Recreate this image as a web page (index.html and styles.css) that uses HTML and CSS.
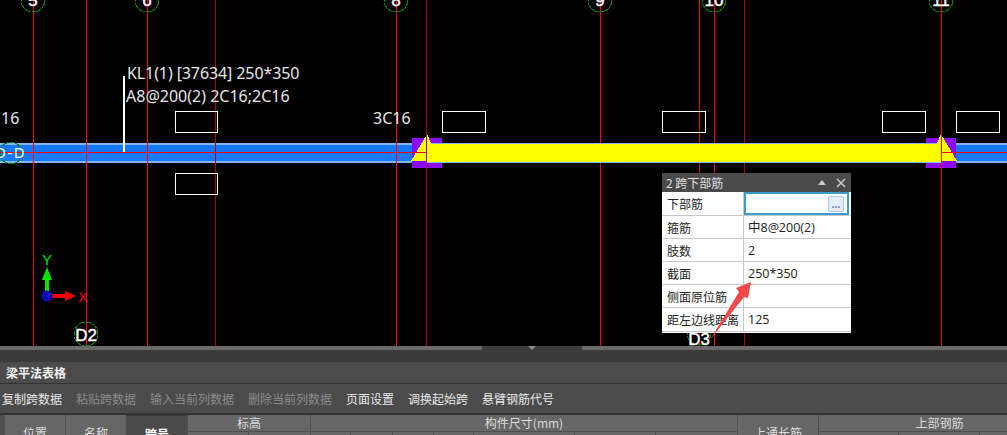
FILE: index.html
```html
<!DOCTYPE html>
<html lang="zh-CN">
<head>
  <meta charset="UTF-8" />
  <title>梁平法表格</title>
  <link rel="stylesheet" href="styles.css">
</head>
<body>

  <!-- CAD canvas -->
  <div class="canvas">
    <svg class="drawing" width="1007" height="346" viewBox="0 0 1007 346">
      <!-- beam, left and right ends are blue -->
      <rect class="beam-edge" x="0" y="143" width="1007" height="20" />
      <rect class="beam-blue" x="0" y="145" width="1007" height="16" />

      <!-- grid lines -->
      <path class="line-red" d="M33.5 0V346M86.5 0V346M147.5 0V346M396.5 0V346M600.5 0V346M699.5 0V346M714.5 0V346M941.5 0V346M0 152.5H1007" />
      <path class="line-dark" d="M215.5 0V346M426.5 0V346M744.5 0V346" />

      <!-- supports -->
      <rect class="support" x="412" y="138" width="30" height="30" />
      <rect class="support" x="926" y="138" width="30" height="30" />
      <path class="line-red" d="M396.5 145V161M0 152.5H412" />

      <!-- selected span -->
      <rect class="beam-edge" x="427" y="143" width="514" height="20" />
      <rect class="beam-yellow" x="427" y="144" width="514" height="18" />
      <polygon class="beam-yellow" points="427,134 431,143 431,161 411,161" />
      <polygon class="beam-yellow" points="941,134 937,143 937,161 957,161" />
      <path class="line-dark" d="M426.5 134V168" />
      <path class="line-red" d="M941.5 134V168M941 152.5H1007M412 152.5H426" />

      <!-- rebar input boxes -->
      <rect class="box" x="175.5" y="111.5" width="42" height="21" />
      <rect class="box" x="175.5" y="173.5" width="42" height="21" />
      <rect class="box" x="442.5" y="111.5" width="43" height="21" />
      <rect class="box" x="662.5" y="111.5" width="43" height="21" />
      <rect class="box" x="882.5" y="111.5" width="43" height="21" />
      <rect class="box" x="956.5" y="111.5" width="43" height="21" />

      <!-- beam label -->
      <rect class="leader" x="123" y="76" width="2" height="76" />
      <text class="note note-tight" x="127" y="79">KL1(1) [37634] 250*350</text>
      <text class="note" x="126" y="102">A8@200(2) 2C16;2C16</text>
      <text class="note" x="1" y="124">16</text>
      <text class="note" x="373" y="124">3C16</text>

      <!-- axis bubbles -->
      <circle class="bubble" cx="33" cy="0" r="12" />
      <circle class="bubble" cx="147" cy="0" r="12" />
      <circle class="bubble" cx="396" cy="0" r="12" />
      <circle class="bubble" cx="600" cy="0" r="12" />
      <circle class="bubble" cx="714" cy="0" r="12" />
      <circle class="bubble" cx="941" cy="0" r="12" />
      <circle class="bubble" cx="86" cy="334" r="12" />
      <circle class="bubble" cx="699" cy="333" r="12" />
      <circle class="bubble" cx="11" cy="153" r="11" />
      <text class="axis-no" x="33" y="6">5</text>
      <text class="axis-no" x="147" y="6">6</text>
      <text class="axis-no" x="396" y="6">8</text>
      <text class="axis-no" x="600" y="6">9</text>
      <text class="axis-no" x="714" y="6">10</text>
      <text class="axis-no" x="941" y="6">11</text>
      <text class="axis-no" x="86" y="341">D2</text>
      <text class="axis-no" x="699" y="345">D3</text>
      <text class="axis-small" x="-5" y="158">D-D</text>

      <!-- coordinate gizmo -->
      <path class="gizmo-y" d="M45 294V280H42L47 267L52 280H49V294Z" />
      <path class="gizmo-x" d="M50 294H65V291L76 296L65 301V298H50Z" />
      <circle class="gizmo-o" cx="47" cy="296" r="5.5" />
      <text class="gizmo-y-label" x="42" y="265">Y</text>
      <text class="gizmo-x-label" x="78" y="302">X</text>
    </svg>

    <!-- span properties panel -->
    <div class="prop-panel">
      <div class="prop-title">
        <span>2 跨下部筋</span>
        <span class="prop-tools">
          <i class="tool-up"></i>
          <svg class="tool-close" width="10" height="10" viewBox="0 0 10 10"><path d="M1 1L9 9M9 1L1 9" /></svg>
        </span>
      </div>
      <div class="prop-row">
        <div class="prop-name">下部筋</div>
        <div class="prop-value prop-focus"><button class="prop-more">...</button></div>
      </div>
      <div class="prop-row">
        <div class="prop-name">箍筋</div>
        <div class="prop-value">中8@200(2)</div>
      </div>
      <div class="prop-row">
        <div class="prop-name">肢数</div>
        <div class="prop-value">2</div>
      </div>
      <div class="prop-row">
        <div class="prop-name">截面</div>
        <div class="prop-value">250*350</div>
      </div>
      <div class="prop-row">
        <div class="prop-name">侧面原位筋</div>
        <div class="prop-value"></div>
      </div>
      <div class="prop-row">
        <div class="prop-name">距左边线距离</div>
        <div class="prop-value">125</div>
      </div>
    </div>

    <!-- red markup arrow -->
    <svg class="markup" width="60" height="70" viewBox="0 0 60 70">
      <polygon points="51,2 36,8 39,12 10,60 44,17 48,18" />
    </svg>
  </div>

  <!-- Bottom dock -->
  <div class="splitter"><div class="splitter-handle"><i></i></div></div>
  <div class="dock-gap"></div>
  <div class="dock-title">梁平法表格</div>
  <div class="dock-toolbar">
    <a>复制跨数据</a>
    <a class="off">粘贴跨数据</a>
    <a class="off">输入当前列数据</a>
    <a class="off">删除当前列数据</a>
    <a>页面设置</a>
    <a>调换起始跨</a>
    <a>悬臂钢筋代号</a>
  </div>

  <div class="sheet">
    <div class="cell tall">位置</div>
    <div class="cell tall">名称</div>
    <div class="cell tall active">跨号</div>
    <div class="cell span-2">标高</div>
    <div class="cell span-7">构件尺寸(mm)</div>
    <div class="cell tall">上通长筋</div>
    <div class="cell span-3">上部钢筋</div>

    <div class="cell"></div><div class="cell"></div>
    <div class="cell"></div><div class="cell"></div><div class="cell"></div><div class="cell"></div><div class="cell"></div><div class="cell"></div><div class="cell"></div>
    <div class="cell"></div><div class="cell"></div><div class="cell"></div>
  </div>

</body>
</html>
```

FILE: styles.css
```css
html, body {
  margin: 0;
  height: 435px;
  overflow: hidden;
  background: #000;
  font-family: "Noto Sans CJK SC", "Noto Sans", sans-serif;
  font-size: 12px;
}

/* Canvas */
.canvas {
  position: relative;
  height: 346px;
  overflow: hidden;
}

.drawing {
  display: block;
}

.line-red, .line-dark, .bubble, .box {
  fill: none;
}

.line-red, .line-dark, .box, .beam-edge, .beam-blue, .beam-yellow, .support, .leader, .bubble {
  shape-rendering: crispEdges;
}

.line-red { stroke: #f00; }
.line-dark { stroke: #b40000; }
.beam-edge { fill: #84b4f4; }
.beam-blue { fill: #1677ff; }
.beam-yellow { fill: #ff0; }
.support { fill: #8c0aff; }
.box { stroke: #fff; }
.leader { fill: #fff; }

.note {
  fill: #e6e6e6;
  font-family: "Noto Sans", sans-serif;
  font-size: 16px;
}

.note-tight {
  letter-spacing: -0.1px;
}

.bubble {
  stroke: #0a7d0a;
  stroke-dasharray: 6 1;
}

.axis-no, .axis-small {
  fill: #fff;
  font-family: "Liberation Sans", sans-serif;
}

.axis-no {
  font-size: 17px;
  stroke: #fff;
  stroke-width: 0.4;
  text-anchor: middle;
}

.axis-small {
  font-size: 14px;
  font-family: "DejaVu Sans", sans-serif;
  letter-spacing: 1.5px;
}

.gizmo-y { fill: #00e400; }
.gizmo-x { fill: #f00000; }
.gizmo-o { fill: #0a0ab4; }

.gizmo-y-label, .gizmo-x-label {
  font-family: "Liberation Sans", sans-serif;
  font-size: 15px;
}

.gizmo-y-label { fill: #00e400; }
.gizmo-x-label { fill: #f00000; }

/* Properties panel */
.prop-panel {
  position: absolute;
  left: 662px;
  top: 173px;
  width: 189px;
  height: 160px;
  background: #fff;
  color: #222;
}

.prop-title {
  display: flex;
  justify-content: space-between;
  align-items: center;
  height: 19px;
  padding: 0 5px 0 4px;
  background: #4a4a4a;
  color: #e0e0e0;
  line-height: 19px;
}

.prop-tools {
  display: flex;
  align-items: center;
  gap: 10px;
}

.tool-up {
  width: 0;
  height: 0;
  border-left: 4px solid transparent;
  border-right: 4px solid transparent;
  border-bottom: 5px solid #ccc;
}

.tool-close path {
  fill: none;
  stroke: #ccc;
  stroke-width: 1.5;
}

.prop-row {
  display: flex;
  height: 23px;
  box-sizing: border-box;
  border-bottom: 1px solid #c8c8c8;
  line-height: 23px;
}

.prop-row:nth-child(2), .prop-row:last-child {
  height: 24px;
  line-height: 24px;
}

.prop-name {
  width: 82px;
  padding-left: 5px;
  box-sizing: border-box;
  border-right: 1px solid #c8c8c8;
  white-space: nowrap;
  overflow: hidden;
}

.prop-value {
  flex: 1;
  padding-left: 4px;
  font-family: "Open Sans", "Noto Sans CJK SC", sans-serif;
  font-size: 12.5px;
}

.prop-focus {
  display: flex;
  justify-content: flex-end;
  align-items: center;
  margin: 0 2px 0 0;
  padding: 0 3px 0 0;
  border: 2px solid #3a9fd0;
}

.prop-more {
  width: 16px;
  height: 16px;
  padding: 0;
  border: 1px solid #a9c9e6;
  border-radius: 2px;
  background: #e4eef8;
  color: #5a7fa5;
  font-size: 11px;
  font-weight: bold;
  line-height: 10px;
}

/* Markup arrow sits over panel and canvas */
.markup {
  position: absolute;
  left: 700px;
  top: 280px;
}

.markup polygon {
  fill: #f4484a;
}

/* Bottom dock */
.splitter {
  height: 4px;
  background: #6a6a6a;
}

.splitter-handle {
  display: flex;
  justify-content: center;
  width: 100px;
  height: 4px;
  margin-left: 482px;
  background: #3c3c3c;
}

.splitter-handle i {
  width: 0;
  height: 0;
  border-left: 4px solid transparent;
  border-right: 4px solid transparent;
  border-top: 4px solid #8a8a8a;
}

.dock-gap {
  height: 12px;
  background: #3a3a3a;
}

.dock-title {
  height: 21px;
  padding-left: 6px;
  border-bottom: 1px solid #333;
  background: #4b4b4b;
  color: #f2f2f2;
  font-weight: bold;
  line-height: 21px;
}

.dock-toolbar {
  display: flex;
  gap: 14px;
  height: 29px;
  padding-left: 2px;
  border-bottom: 2px solid #333;
  background: #4b4b4b;
  color: #e8e8e8;
  line-height: 29px;
}

.dock-toolbar .off {
  color: #8b8b8b;
}

/* Table header, cut off by the window like the real dock */
.sheet {
  display: grid;
  grid-template-columns: 60px 60px 60px 60px 61px 39px 41px 40px 39px 100px 80px 81px 80px 79px 80px 80px;
  grid-template-rows: 16px 30px;
  gap: 1px;
  width: 1002px;
  height: 20px;
  overflow: hidden;
  padding-left: 5px;
  background: #4f4f4f;
  color: #dcdcdc;
  line-height: 16px;
  text-align: center;
}

.cell {
  background: #666;
}

.tall {
  grid-row: span 2;
  padding-top: 10px;
}

.active {
  background: #4a4a4a;
  color: #fff;
  font-weight: bold;
  border-top: 1px solid #3a3a3a;
}

.span-2 { grid-column: span 2; }
.span-3 { grid-column: span 3; }
.span-7 { grid-column: span 7; }
```
